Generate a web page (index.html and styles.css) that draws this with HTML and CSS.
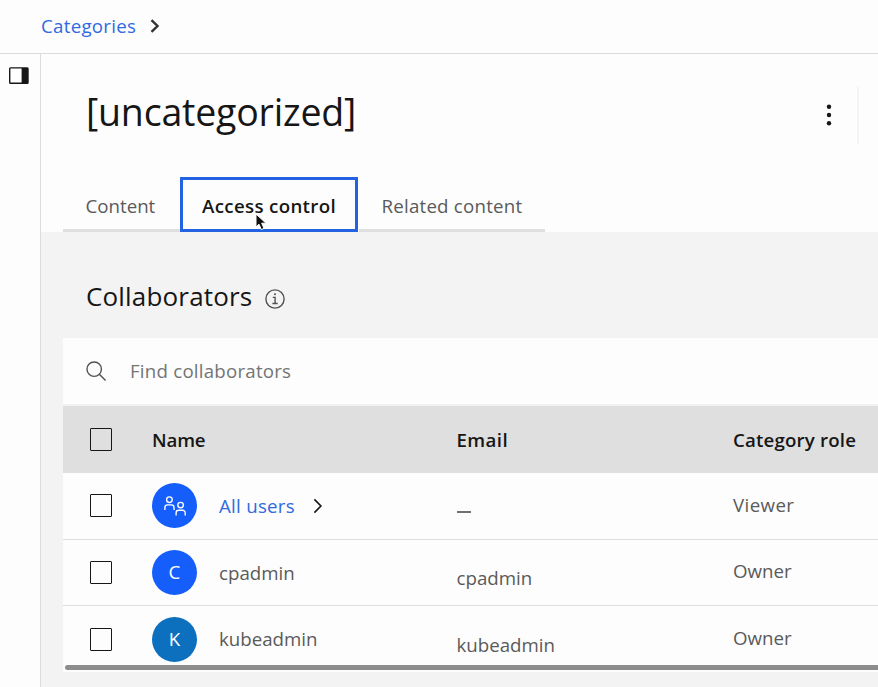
FILE: index.html
```html
<!DOCTYPE html>
<html lang="en">
<head>
<meta charset="utf-8">
<title>Categories</title>
<link rel="stylesheet" href="styles.css">
</head>
<body>
<nav class="breadcrumb">
  <a class="crumb">Categories</a>
  <svg class="crumb-arrow" width="10" height="14" viewBox="0 0 10 14"><path d="M1.500 1.200 7.500 7 1.500 12.800"/></svg>
</nav>
<div class="shell">
  <aside class="rail">
    <svg width="20" height="18" viewBox="0 0 20 18"><rect x=".7" y=".9" width="18.300" height="15.400" rx=".8" fill="#fff" stroke="#161616" stroke-width="1.400"/><path d="M12.600 1h6.400v15.400h-6.400z" fill="#161616"/></svg>
  </aside>
  <main class="main">
    <header class="head">
      <div class="title-row">
        <h1>[uncategorized]</h1>
        <div class="overflow">
          <svg width="6" height="22" viewBox="0 0 6 22" fill="#161616"><circle cx="3" cy="2.700" r="2.200"/><circle cx="3" cy="11" r="2.200"/><circle cx="3" cy="19.300" r="2.200"/></svg>
        </div>
      </div>
      <div class="tabs">
        <div class="tab tab-content"><span>Content</span></div>
        <div class="tab tab-active"><span>Access control</span>
          <svg class="cursor" width="13" height="19" viewBox="0 0 13 19"><path d="M1 1v13l3-2.800 2.300 5.300 2.700-1.100-2.300-5.200h4.300z" fill="#111" stroke="#fff" stroke-width="1"/></svg>
        </div>
        <div class="tab tab-related"><span>Related content</span></div>
      </div>
    </header>
    <section class="body">
      <div class="section-title">
        <h2>Collaborators</h2>
        <svg width="20" height="20" viewBox="0 0 20 20" fill="none" stroke="#525252" stroke-width="1.400"><circle cx="10" cy="10" r="9.100"/><path d="M7.800 8.400h2.300v5.900M7.400 14.500h5.300"/><circle cx="10" cy="5.200" r="1" fill="#525252" stroke="none"/></svg>
      </div>
      <div class="panel">
        <div class="search">
          <svg width="21" height="21" viewBox="0 0 21 21" fill="none" stroke="#525252" stroke-width="1.400"><circle cx="8.200" cy="8.200" r="7.200"/><path d="m13.300 13.300 6.300 6.300"/></svg>
          <span>Find collaborators</span>
        </div>
        <div class="row row-head">
          <i class="box"></i><b class="name">Name</b><b class="email">Email</b><b class="role">Category role</b>
        </div>
        <div class="row">
          <i class="box"></i>
          <div class="user">
            <span class="avatar"><svg width="22" height="20" viewBox="0 0 22 20" fill="none" stroke="#fff" stroke-width="1.350"><circle cx="5.400" cy="3.700" r="2.800"/><path d="M.9 14v-2.500a2.600 2.600 0 0 1 2.600-2.600h3.900a2.600 2.600 0 0 1 2.600 2.600V14"/><circle cx="16.600" cy="9.100" r="2.800"/><path d="M12.100 19.500v-2.600a2.600 2.600 0 0 1 2.600-2.600h3.900a2.600 2.600 0 0 1 2.600 2.600v2.600"/></svg></span>
            <a>All users</a>
            <svg class="row-arrow" width="10" height="16" viewBox="0 0 10 16"><path d="m1.400 1.400 6.500 6.600-6.500 6.600"/></svg>
          </div>
          <span class="email"><i class="dash"></i></span><span class="role viewer">Viewer</span>
        </div>
        <div class="row">
          <i class="box"></i>
          <div class="user"><span class="avatar">C</span><span class="login">cpadmin</span></div>
          <span class="email">cpadmin</span><span class="role">Owner</span>
        </div>
        <div class="row row-last">
          <i class="box"></i>
          <div class="user"><span class="avatar teal">K</span><span>kubeadmin</span></div>
          <span class="email">kubeadmin</span><span class="role">Owner</span>
        </div>
        <div class="scroll"></div>
      </div>
    </section>
  </main>
</div>
</body>
</html>
```

FILE: styles.css
```css
* { box-sizing: border-box; }
body { margin: 0; height: 687px; overflow: hidden; background: #fdfdfd; color: #5a5a5a; font: 18.7px/26px "Open Sans", "Noto Sans", sans-serif; }
h1, h2 { margin: 0; font-weight: 400; color: #161616; }
svg { display: block; flex: none; }
span, b, a, h1, h2 { white-space: nowrap; }
a { color: #2f6ae0; letter-spacing: .27px; }
.breadcrumb { display: flex; align-items: center; height: 54px; padding-left: 41px; border-bottom: 1px solid #dcdcdc; }
.crumb { width: 94px; margin-top: -2px; }
.crumb-arrow { margin-left: 15px; margin-top: -2px; fill: none; stroke: #333; stroke-width: 2.4; }
.shell { display: flex; height: 633px; }
.rail { width: 41px; border-right: 1px solid #dcdcdc; padding: 13px 0 0 9px; }
.main { flex: 1; min-width: 0; display: flex; flex-direction: column; }
.head { height: 178px; }
.title-row { display: flex; justify-content: space-between; height: 123px; padding: 32px 0 0 45px; }
h1 { font-size: 37.5px; line-height: 52px; letter-spacing: -.2px; }
.overflow { width: 38px; height: 57px; margin: 1px 19px 0 0; padding: 17px 0 0 5px; border-right: 2px solid #f4f4f4; }
.tabs { display: flex; height: 55px; padding-left: 22px; }
.tab { position: relative; height: 55px; padding-top: 16px; border-bottom: 3px solid #dfdfdf; }
.tab-content { width: 117px; padding-left: 22.500px; }
.tab-active { width: 178px; padding: 13px 0 0 19px; border: 3px solid #2362e0; color: #161616; font-weight: 600; letter-spacing: .33px; }
.tab-related { width: 186px; padding-left: 22.500px; margin-left: 1px; letter-spacing: .22px; }
.cursor { position: absolute; left: 72px; top: 33px; }
.body { flex: 1; background: #f3f3f3; padding: 44px 0 0 22px; }
.section-title { display: flex; align-items: center; height: 40px; padding-left: 23px; margin-bottom: 22px; }
h2 { width: 179px; font-size: 26px; line-height: 36px; letter-spacing: .17px; }
.section-title svg { margin-top: 5px; }
.panel { height: 334px; background: #fdfdfd; }
.search { display: flex; align-items: center; height: 66px; padding-left: 23px; gap: 23px; color: #747474; letter-spacing: .22px; }
.row { display: grid; grid-template-columns: 62px 304.500px 276.500px 1fr; align-items: center; height: 66.500px; padding-left: 27px; border-bottom: 1px solid #dfdfdf; }
.row-head { height: 69px; padding-top: 1px; background: #dfdfdf; border-top: 2px solid #f1f1f1; color: #161616; }
.row b { font-weight: 600; }
.row .name { letter-spacing: -.15px; }
.row-head .email { letter-spacing: .4px; }
.row-head .role { letter-spacing: .17px; }
.row:not(.row-head) .email { padding-top: 12px; }
.row:not(.row-head) .role { margin-top: -2px; }
.row .viewer { letter-spacing: .4px; }
.login { margin-top: 1px; }
.box { width: 22px; height: 23px; border: 1px solid #161616; border-radius: 1px; }
.user { display: flex; align-items: center; }
.avatar { width: 45px; height: 45px; margin-right: 22px; border-radius: 50%; background: #165efb; color: #fff; display: flex; align-items: center; justify-content: center; }
.teal { background: #0d70bf; }
.user a { width: 76px; }
.row-arrow { margin-left: 18px; fill: none; stroke: #161616; stroke-width: 1.600; }
.dash { display: block; width: 14px; height: 2px; background: #6f6f6f; }
.row.row-last { height: 58.500px; border: 0; padding-top: 8px; }
.scroll { height: 5px; margin: 0 0 0 1.500px; border-radius: 3px 0 0 3px; background: #8d8d8d; }
```
